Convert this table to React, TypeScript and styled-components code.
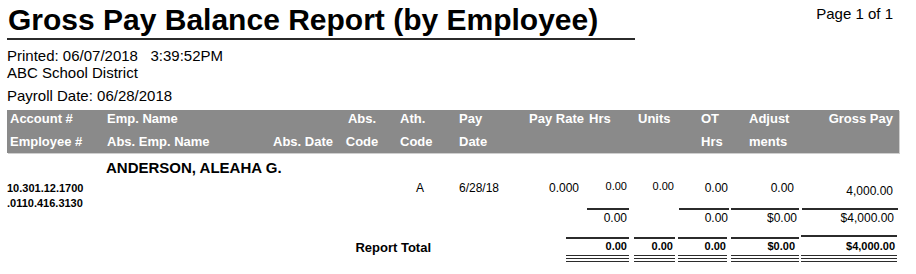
import React from 'react';
import styled, { createGlobalStyle } from 'styled-components';

const GlobalStyle = createGlobalStyle`
  html, body {
    margin: 0;
    padding: 0;
    background: #ffffff;
  }
  body {
    font-family: 'Liberation Sans', Arial, sans-serif;
    color: #000;
  }
`;

// one column template shared by header, name row and body
const COLUMNS = '93px 166px 66px 48px 64px 66px 63px 44px 43px 51px 68px 98px';

const Page = styled.div`
  width: 916px;
  height: 274px;
  padding: 0 23px 0 7px;
  box-sizing: border-box;
  overflow: hidden;
`;

const TopBar = styled.div`
  display: flex;
  justify-content: space-between;
  align-items: flex-start;
`;

const Title = styled.h1`
  width: 628px;
  margin: 4px 0 0;
  padding: 0 0 2px 1px;
  box-sizing: border-box;
  font-size: 30px;
  line-height: 32px;
  font-weight: 700;
  border-bottom: 2px solid #2b2b2b;
`;

const PageNum = styled.div`
  padding-top: 5px;
  font-size: 15px;
  line-height: 17px;
`;

const Meta = styled.div`
  margin-top: 7px;
`;

const MetaLine = styled.div<{ $gap?: number }>`
  margin-top: ${(p) => p.$gap || 0}px;
  font-size: 15px;
  line-height: 17px;
  white-space: pre;
`;

const HeaderBar = styled.div`
  display: grid;
  grid-template-columns: ${COLUMNS};
  column-gap: 2px;
  width: 892px;
  margin-top: 6px;
  padding-bottom: 2px;
  background: #8a8a8a;
  box-shadow: 1px 1px 0 #cfcfcf;
  color: #fff;
`;

const HeadCell = styled.div<{ $align?: string; $pl?: number; $pr?: number }>`
  display: flex;
  flex-direction: column;
  gap: 5px;
  padding-left: ${(p) => p.$pl || 0}px;
  padding-right: ${(p) => p.$pr || 0}px;
  text-align: ${(p) => p.$align || 'left'};
  font-size: 13px;
  font-weight: 700;
  white-space: nowrap;
`;

const HeadLine = styled.span`
  display: block;
  height: 18px;
  line-height: 18px;
`;

const NameRow = styled.div`
  display: grid;
  grid-template-columns: ${COLUMNS};
  column-gap: 2px;
  margin-top: 6px;
`;

const EmpName = styled.div`
  grid-column: 2 / span 4;
  padding-left: 4px;
  font-size: 15px;
  line-height: 18px;
  font-weight: 700;
`;

const Body = styled.div`
  display: grid;
  grid-template-columns: ${COLUMNS};
  grid-template-rows: 27px 19px auto;
  column-gap: 2px;
  margin-top: 4px;
`;

const Account = styled.div`
  grid-column: 1;
  grid-row: 1 / span 2;
  font-size: 11px;
  line-height: 15px;
  font-weight: 700;
`;

const Value = styled.div<{ $col: number; $align?: string; $pl?: number; $pr?: number; $size?: number; $shift?: number }>`
  grid-column: ${(p) => p.$col};
  grid-row: 1;
  margin-top: ${(p) => p.$shift || 0}px;
  padding-left: ${(p) => p.$pl || 0}px;
  padding-right: ${(p) => p.$pr || 0}px;
  text-align: ${(p) => p.$align || 'right'};
  font-size: ${(p) => p.$size || 12}px;
  line-height: 15px;
  white-space: nowrap;
`;

const SubTotal = styled.div<{ $col: number; $pr?: number; $ml?: number; $mr?: number }>`
  grid-column: ${(p) => p.$col};
  grid-row: 2;
  margin-left: ${(p) => p.$ml || 0}px;
  margin-right: ${(p) => p.$mr || 0}px;
  padding: 1px ${(p) => p.$pr || 0}px 0 0;
  border-top: 2px solid #2b2b2b;
  text-align: right;
  font-size: 12px;
  line-height: 15px;
  white-space: nowrap;
`;

const ReportLabel = styled.div`
  grid-column: 3 / span 3;
  grid-row: 3;
  margin-top: 13px;
  padding-right: 21px;
  text-align: right;
  font-size: 13px;
  line-height: 16px;
  font-weight: 700;
`;

const GrandTotal = styled.div<{ $col: number; $pr?: number; $ml?: number; $mr?: number; $raise?: number }>`
  grid-column: ${(p) => p.$col};
  grid-row: 3;
  margin: ${(p) => 10 - (p.$raise || 0)}px ${(p) => p.$mr || 0}px 0 ${(p) => p.$ml || 0}px;
  padding: ${(p) => 2 + (p.$raise || 0)}px ${(p) => p.$pr || 0}px 0 0;
  border-top: 2px solid #2b2b2b;
  border-bottom: 1px solid #2b2b2b;
  text-align: right;
  font-size: 11px;
  line-height: 11px;
  font-weight: 700;
  white-space: nowrap;
  position: relative;

  &::after {
    content: '';
    position: absolute;
    left: 0;
    right: 0;
    bottom: -7px;
    height: 2px;
    border-top: 1px solid #2b2b2b;
    border-bottom: 1px solid #2b2b2b;
  }
`;

const App: React.FC = () => {
  return (
    <Page>
      <GlobalStyle />
      <TopBar>
        <Title>Gross Pay Balance Report (by Employee)</Title>
        <PageNum>Page 1 of 1</PageNum>
      </TopBar>

      <Meta>
        <MetaLine>Printed: 06/07/2018   3:39:52PM</MetaLine>
        <MetaLine>ABC School District</MetaLine>
        <MetaLine $gap={6}>Payroll Date: 06/28/2018</MetaLine>
      </Meta>

      <HeaderBar>
        <HeadCell $pl={3}>
          <HeadLine>Account #</HeadLine>
          <HeadLine>Employee #</HeadLine>
        </HeadCell>
        <HeadCell $pl={5}>
          <HeadLine>Emp. Name</HeadLine>
          <HeadLine>Abs. Emp. Name</HeadLine>
        </HeadCell>
        <HeadCell $align="right" $pr={3}>
          <HeadLine />
          <HeadLine>Abs. Date</HeadLine>
        </HeadCell>
        <HeadCell $align="center">
          <HeadLine>Abs.</HeadLine>
          <HeadLine>Code</HeadLine>
        </HeadCell>
        <HeadCell $pl={12}>
          <HeadLine>Ath.</HeadLine>
          <HeadLine>Code</HeadLine>
        </HeadCell>
        <HeadCell $pl={5}>
          <HeadLine>Pay</HeadLine>
          <HeadLine>Date</HeadLine>
        </HeadCell>
        <HeadCell $align="right" $pr={1}>
          <HeadLine>Pay Rate</HeadLine>
        </HeadCell>
        <HeadCell $pl={2}>
          <HeadLine>Hrs</HeadLine>
        </HeadCell>
        <HeadCell $pl={5}>
          <HeadLine>Units</HeadLine>
        </HeadCell>
        <HeadCell $pl={23}>
          <HeadLine>OT</HeadLine>
          <HeadLine>Hrs</HeadLine>
        </HeadCell>
        <HeadCell $pl={18}>
          <HeadLine>Adjust</HeadLine>
          <HeadLine>ments</HeadLine>
        </HeadCell>
        <HeadCell $align="right" $pr={6}>
          <HeadLine>Gross Pay</HeadLine>
        </HeadCell>
      </HeaderBar>

      <NameRow>
        <EmpName>ANDERSON, ALEAHA G.</EmpName>
      </NameRow>

      <Body>
        <Account>
          10.301.12.1700
          <br />
          .0110.416.3130
        </Account>
        <Value $col={5} $align="center">A</Value>
        <Value $col={6} $align="left" $pl={5}>6/28/18</Value>
        <Value $col={7} $pr={6}>0.000</Value>
        <Value $col={8} $pr={4} $size={11} $shift={-2}>0.00</Value>
        <Value $col={9} $pr={2} $size={11} $shift={-2}>0.00</Value>
        <Value $col={10} $pr={1}>0.00</Value>
        <Value $col={11} $pr={5}>0.00</Value>
        <Value $col={12} $pr={6} $shift={3}>4,000.00</Value>

        <SubTotal $col={8} $mr={2} $pr={2}>0.00</SubTotal>
        <SubTotal $col={10} $ml={1} $pr={1}>0.00</SubTotal>
        <SubTotal $col={11} $pr={2}>$0.00</SubTotal>
        <SubTotal $col={12} $ml={1} $mr={1} $pr={4}>$4,000.00</SubTotal>

        <ReportLabel>Report Total</ReportLabel>
        <GrandTotal $col={8} $ml={-21} $mr={2} $pr={2}>0.00</GrandTotal>
        <GrandTotal $col={9} $ml={1} $mr={1} $pr={2}>0.00</GrandTotal>
        <GrandTotal $col={10} $mr={2} $pr={1}>0.00</GrandTotal>
        <GrandTotal $col={11} $pr={4}>$0.00</GrandTotal>
        <GrandTotal $col={12} $mr={2} $pr={2} $raise={2}>$4,000.00</GrandTotal>
      </Body>
    </Page>
  );
};

export default App;
